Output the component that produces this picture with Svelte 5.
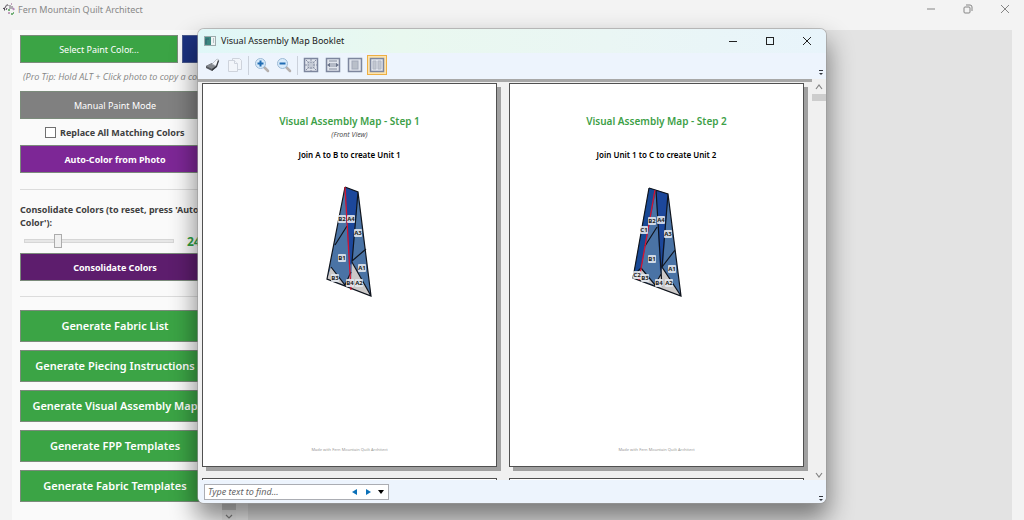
<script>
  let replaceAll = $state(false);
  let shades = $state(24);
  let query = $state('');

  const generators = ['Fabric List', 'Piecing Instructions', 'Visual Assembly Map', 'FPP Templates', 'Fabric Templates'];

  const steps = [
    {
      title: 'Visual Assembly Map - Step 1',
      view: '(Front View)',
      join: 'Join A to B to create Unit 1',
      shapes: [
        { p: '35,12 48,17 61,121 17,104', f: '#4a73a5' },
        { p: '35,12 48,17 42,89 39,90', f: '#1c479b' },
        { p: '42,86 61,121 41,113', f: '#ccc9c8' },
        { p: '21,92 35,110 17,104', f: '#ccc9c8' },
        { p: '41,97 42,114 35,110', f: '#ccc9c8' }
      ],
      lines: '35,12 48,17 61,121 17,104 35,12 M48,17 42,87 61,121 M56,74 42,86 M37,51 25,70 M21,92 35,110 41,97',
      seam: '35,12 41,115',
      labels: [['B2', 32, 44], ['A4', 41, 44], ['A3', 48, 58], ['B1', 32, 83], ['A1', 52, 93], ['B3', 25, 103], ['B4', 40, 108], ['A2', 49, 108]]
    },
    {
      title: 'Visual Assembly Map - Step 2',
      view: '',
      join: 'Join Unit 1 to C to create Unit 2',
      shapes: [
        { p: '32,13 51,19 64,121 16,103', f: '#4a73a5' },
        { p: '32,13 39,15 24,95 16,103', f: '#174895' },
        { p: '39,15 51,19 46,92 43,96', f: '#1c479b' },
        { p: '45,92 64,121 44,114', f: '#ccc9c8' },
        { p: '24,94 38,110 16,103', f: '#ccc9c8' },
        { p: '44,98 45,114 38,110', f: '#ccc9c8' }
      ],
      lines: '32,13 51,19 64,121 16,103 32,13 M39,15 45,112 M51,19 45,92 64,121 M58,75 45,92 M40,52 28,71 M24,93 38,110 44,99 M16,101 24,93',
      seam: '38,15 22,105',
      labels: [['B2', 35, 46], ['A4', 44, 45], ['C1', 27, 55], ['A3', 51, 59], ['B1', 35, 84], ['A1', 55, 94], ['C2', 20, 100], ['B3', 28, 103], ['B4', 42, 108], ['A2', 52, 108]]
    }
  ];
</script>

<div class="app">
  <header class="app-title">
    <svg class="logo" width="13" height="14" viewBox="0 0 13 14" aria-hidden="true">
      <path d="M1 6.500c2 0 2.500-1 3-2.500s2-2 2 0M2.500 8.500V6M5 6l-1 2" fill="none" stroke="#4d4651" />
      <path d="M8 3v4M10 4v3" stroke="#6d6471" />
      <path d="M11 6l1 2" stroke="#b48bb9" stroke-width="2" />
      <path d="M6 8h2M9 12h2M11 11h1" stroke="#4c9c53" stroke-width="1.500" />
      <path d="M6 11h2M9 2h1" stroke="#8f4d85" />
    </svg>
    <h1>Fern Mountain Quilt Architect</h1>
    <div class="app-controls">
      <button aria-label="Minimize application"><svg width="10" height="10" viewBox="0 0 10 10"><path d="M1 5h8" /></svg></button>
      <button aria-label="Restore application"><svg width="10" height="10" viewBox="0 0 10 10"><rect x="1" y="3" width="6" height="6" rx="1" /><path d="M3 1h4q2 0 2 2v4" /></svg></button>
      <button aria-label="Close application"><svg width="10" height="10" viewBox="0 0 10 10"><path d="M1 1l8 8M9 1L1 9" /></svg></button>
    </div>
  </header>

  <div class="workspace">
    <aside>
      <div class="tools">
        <div class="paint-row">
          <button class="fill green light">Select Paint Color...</button>
          <button class="swatch" aria-label="Current paint color"></button>
        </div>
        <p class="tip">(Pro Tip: Hold ALT + Click photo to copy a color)</p>
        <button class="fill gray light">Manual Paint Mode</button>
        <label class="check"><input type="checkbox" bind:checked={replaceAll} />Replace All Matching Colors</label>
        <button class="fill purple">Auto-Color from Photo</button>
        <hr />
        <label class="consolidate" for="shades">Consolidate Colors (to reset, press 'Auto-Color'):</label>
        <div class="slider-row">
          <input id="shades" type="range" min="2" max="110" bind:value={shades} />
          <output for="shades">{shades}</output>
        </div>
        <button class="fill plum">Consolidate Colors</button>
        <hr class="second" />
        <div class="generators">
          {#each generators as name}
            <button class="fill green">Generate {name}</button>
          {/each}
        </div>
      </div>
      <div class="side-scroll">
        <i></i>
        <svg width="8" height="6" viewBox="0 0 8 6" aria-hidden="true"><path d="M1 1l3 3 3-3" /></svg>
      </div>
    </aside>
    <main></main>
  </div>

  <section class="dialog" role="dialog" aria-labelledby="booklet-title">
    <header class="dialog-title">
      <svg width="12" height="10" viewBox="0 0 12 10" aria-hidden="true">
        <rect x=".5" y=".5" width="11" height="9" fill="#eef3f3" stroke="#9eabad" />
        <rect x="1" y="1" width="6" height="8" fill="#3c8780" />
        <path d="M2 8V3h3" fill="none" stroke="#32616c" />
        <path d="M9.500 2v5" stroke="#b7c5c8" />
      </svg>
      <h2 id="booklet-title">Visual Assembly Map Booklet</h2>
      <div class="dialog-controls">
        <button aria-label="Minimize"><svg width="10" height="10" viewBox="0 0 10 10"><path d="M1 5.500h8" /></svg></button>
        <button aria-label="Maximize"><svg width="10" height="10" viewBox="0 0 10 10"><rect x="1.500" y="1.500" width="7" height="7" /></svg></button>
        <button aria-label="Close"><svg width="10" height="10" viewBox="0 0 10 10"><path d="M1 1l8 8M9 1L1 9" /></svg></button>
      </div>
    </header>

    <div class="toolbar" role="toolbar" aria-label="Document">
      <button aria-label="Print">
        <svg width="16" height="16" viewBox="0 0 16 16">
          <path d="M1 9l6-3 5 3-5 5-6-3z" fill="#55585d" />
          <path d="M1 9l6-3 5 3-5 3z" fill="#85898e" />
          <path d="M7 7l5-5 2 1-3 6z" fill="#f4f6f9" stroke="#a9afb7" stroke-width=".7" />
          <path d="M13 3l1 1-2 6-5 4v-2l4-3z" fill="#34373c" />
        </svg>
      </button>
      <button aria-label="Copy">
        <svg width="16" height="16" viewBox="0 0 16 16" fill="#f2f5fa" stroke="#ced3dc">
          <path d="M5.500 1.500h7l2 2v9h-9z" /><path d="M1.500 3.500h6l3 3v8h-9z" /><path d="M7.500 3.500v3h3" />
        </svg>
      </button>
      <span class="sep"></span>
      {#each ['Zoom in', 'Zoom out'] as name, i}
        <button aria-label={name}>
          <svg width="16" height="16" viewBox="0 0 16 16">
            <path d="M10 10l4 4" stroke="#b5b0ae" stroke-width="2.500" stroke-linecap="round" />
            <circle cx="6.500" cy="6.500" r="5" fill="#d8ebfb" stroke="#9dbad5" />
            <path d={i ? 'M3.500 6.500h6' : 'M3.500 6.500h6M6.500 3.500v6'} stroke="#216db4" stroke-width="2" />
          </svg>
        </button>
      {/each}
      <span class="sep"></span>
      {#each ['Actual size', 'Page width', 'Whole page', 'Two pages'] as name, i}
        <button aria-label={name} class:active={i === 3}>
          <svg width="16" height="16" viewBox="0 0 16 16">
            <rect x="1.500" y="1.500" width="13" height="13" fill="#e1e5ed" stroke="#7d869e" stroke-width="1.500" />
            {#if i === 0}
              <rect x="4" y="4" width="8" height="8" fill="#c4cad5" />
              <path d="M8 2v4M8 10v4M2 8h4M10 8h4M3 3l3 3M13 3l-3 3M3 13l3-3M13 13l-3-3" stroke="#858da2" stroke-dasharray="2 1" />
            {:else if i === 1}
              <path d="M4 3h8v2H4zM4 11h8v2H4zM4 6h8v4H4z" fill="#b4bac6" />
              <path d="M2 8l3-2v4zM14 8l-3-2v4z" fill="#69738a" />
            {:else if i === 2}
              <rect x="5" y="4" width="6" height="8" fill="#b9bfc9" stroke="#a3aaba" />
            {:else}
              <path d="M4 4h3v8H4zM9 4h3v8H9z" fill="#c2c7d0" stroke="#b2b8c5" />
            {/if}
          </svg>
        </button>
      {/each}
      <svg class="overflow" width="6" height="6" viewBox="0 0 6 6" aria-hidden="true"><path d="M1 0h4v1H1zM1 3h4L3 5z" /></svg>
    </div>

    <div class="viewer">
      <div class="pages">
        {#each steps as step}
          <article>
            <h3>{step.title}</h3>
            <p class="view">{step.view}</p>
            <h4>{step.join}</h4>
            <svg class="block" width="80" height="130" viewBox="0 0 80 130" role="img" aria-label={step.join}>
              {#each step.shapes as s}<polygon points={s.p} fill={s.f} />{/each}
              <path d={'M' + step.lines} fill="none" stroke="#10151e" stroke-width="1.200" />
              <path d={'M' + step.seam} stroke="#d51431" stroke-width="1.300" />
              {#each step.labels as [t, x, y]}
                <rect x={x - 4} y={y - 4} width="8" height="8" rx="1" fill="#e4e8ef" fill-opacity=".88" />
                <text {x} y={y + 2}>{t}</text>
              {/each}
            </svg>
            <footer>Made with Fern Mountain Quilt Architect</footer>
          </article>
        {/each}
        <article class="next"></article>
        <article class="next"></article>
      </div>
      <div class="doc-scroll">
        <svg width="8" height="6" viewBox="0 0 8 6" aria-hidden="true"><path d="M1 5l3-4 3 4" /></svg>
        <i></i>
        <svg class="down" width="8" height="6" viewBox="0 0 8 6" aria-hidden="true"><path d="M1 1l3 4 3-4" /></svg>
      </div>
    </div>

    <div class="find-bar">
      <div class="find">
        <input type="text" aria-label="Find text" placeholder="Type text to find..." bind:value={query} />
        <button aria-label="Find previous"><svg width="6" height="6" viewBox="0 0 6 6"><path d="M5 0v6L0 3z" fill="#0a70b8" /></svg></button>
        <button aria-label="Find next"><svg width="6" height="6" viewBox="0 0 6 6"><path d="M1 0v6l5-3z" fill="#0a70b8" /></svg></button>
        <button aria-label="Find options"><svg width="6" height="6" viewBox="0 0 6 6"><path d="M0 1h6L3 5z" /></svg></button>
      </div>
      <svg class="overflow" width="6" height="6" viewBox="0 0 6 6" aria-hidden="true"><path d="M1 0h4v1H1zM1 3h4L3 5z" /></svg>
    </div>
  </section>
</div>

<style>
  :global(body) { margin: 0; }
  * { box-sizing: border-box; }
  h1, h2, h3, h4, p { margin: 0; font-weight: 400; }
  button, input { font: inherit; margin: 0; padding: 0; border: 0; background: none; }
  svg { display: block; flex: none; }
  .app {
    position: relative; height: 100vh; min-height: 520px; display: flex; flex-direction: column; overflow: hidden;
    background: #f3f3f3; font-family: "Noto Sans", "Open Sans", sans-serif; font-size: 9px; color: #404040;
  }
  .app-title { height: 30px; display: flex; align-items: flex-start; padding: 2px 14px 0 2px; gap: 3px; flex: none; }
  h1 { font-size: 9px; line-height: 15px; color: #888; }
  .app-controls { margin-left: auto; display: flex; gap: 27px; padding-top: 2px; }
  .app-controls svg, .dialog-controls svg { fill: none; stroke: #858585; }
  .app-controls button { width: 10px; height: 10px; }

  .workspace { flex: 1; min-height: 0; display: flex; padding: 0 12px; }
  aside { width: 224px; display: flex; background: #fafafa; flex: none; }
  .tools { width: 210px; padding: 5px 12px 0 8px; }
  .paint-row { display: flex; gap: 4px; }
  .fill { display: block; width: 100%; height: 28px; border: 1px solid #7b8b7b; color: #fff; font-weight: 700; white-space: nowrap; }
  .fill.light { font-weight: 400; }
  .paint-row .fill { flex: 1; }
  .swatch { width: 28px; height: 28px; background: #1c3281; border: 1px solid #4b5a8d; }
  .green { background: #3ba445; }
  .gray { background: #808080; }
  .purple { background: #7d2796; }
  .plum { background: #5d1d6d; }
  .tip { font-family: "Open Sans", "Noto Sans", sans-serif; line-height: 14px; margin: 7px 0; padding-left: 3px; font-style: italic; color: #858585; white-space: nowrap; }
  .check { display: flex; align-items: center; gap: 4px; padding-left: 25px; height: 26px; font-weight: 700; white-space: nowrap; }
  .check input { appearance: none; width: 11px; height: 11px; border: 1px solid #707070; background: #fff; }
  .check input:checked { background: #3ba445; }
  hr { border: 0; border-top: 1px solid #dcdcdc; margin: 16px 0 13px; }
  .consolidate { display: block; line-height: 13px; font-weight: 700; }
  .slider-row { display: flex; align-items: center; height: 24px; padding-left: 4px; gap: 13px; }
  .slider-row input { appearance: none; width: 150px; height: 14px; }
  .slider-row input::-webkit-slider-runnable-track { height: 4px; background: #e7e7e7; border: 1px solid #d6d6d6; }
  .slider-row input::-webkit-slider-thumb { appearance: none; width: 8px; height: 14px; margin-top: -6px; background: #f0f0f0; border: 1px solid #acacac; }
  output { font-size: 12px; font-weight: 700; color: #2fa142; }
  hr.second { margin: 15px 0 13px; }
  .generators { display: grid; gap: 8px; }
  .generators .fill { height: 32px; padding-bottom: 1px; font-size: 11px; font-weight: 600; }
  .side-scroll { width: 14px; display: flex; flex-direction: column; justify-content: flex-end; align-items: center; gap: 4px; background: #f0f0f0; }
  .side-scroll i { width: 14px; height: 440px; background: #cdcdcd; }
  .side-scroll svg, .doc-scroll svg { fill: none; stroke: #858585; stroke-width: 1.2; }
  main { flex: 1; margin-left: 12px; background: #e3e3e3; }

  .dialog {
    position: absolute; top: 29px; right: 198px; bottom: 17px; left: 198px; display: flex; flex-direction: column; overflow: hidden;
    background: #f0f0f0; border-radius: 6px; box-shadow: 0 0 0 1px #9999, 0 14px 26px 2px #0007;
  }
  .dialog-title { height: 24px; display: flex; align-items: center; gap: 5px; padding: 0 14px 0 6px; background: linear-gradient(90deg, #e0f7f8, #e9f8ef 32%, #eaf6f4 65%, #e8f4fb); flex: none; }
  h2 { font-size: 9px; line-height: 16px; color: #202020; }
  .dialog-controls { margin-left: auto; display: flex; gap: 27px; }
  .dialog-controls button { width: 10px; height: 10px; }
  .dialog-controls svg { stroke: #222; }
  .toolbar { height: 26px; display: flex; align-items: center; padding: 0 2px 2px 5px; gap: 2px; background: #edf4fd; flex: none; }
  .toolbar button { width: 20px; height: 20px; display: grid; place-items: center; }
  .toolbar .active { border: 1px solid #edaf43; background: #fce3ae; }
  .sep { width: 1px; height: 19px; margin: 0 1px; background: #cbd1db; }
  .overflow { fill: #30343c; margin: auto 0 1px auto; }
  .viewer { flex: 1; min-height: 0; display: flex; }
  .pages { flex: 1; display: grid; grid-template-columns: 1fr 1fr; align-content: start; gap: 11px 12px; padding: 1px 8px 0 4px; border-top: 3px solid #a8a8a8; overflow: hidden; }
  article { aspect-ratio: 295 / 384; min-width: 0; display: flex; flex-direction: column; align-items: center; background: #fff; border: 1px solid #505050; box-shadow: 4px 4px 0 #a0a0a0; padding: 29px 8px 11px; }
  h3 { font-size: 10px; line-height: 16px; font-weight: 600; color: #3da047; }
  .view { height: 12px; font-size: 7px; line-height: 12px; font-style: italic; color: #505050; }
  h4 { margin-top: 8px; font-size: 8px; line-height: 12px; font-weight: 600; color: #000; }
  .block { margin-top: 14px; }
  .block text { font-size: 6px; font-weight: 700; text-anchor: middle; fill: #222; }
  article footer { margin-top: auto; font-size: 4px; line-height: 10px; color: #999; }
  .doc-scroll { width: 14px; display: flex; flex-direction: column; align-items: center; padding: 5px 0 2px; gap: 4px; }
  .doc-scroll i { width: 14px; height: 7px; background: #cdcdcd; }
  .doc-scroll .down { margin-top: auto; }
  .find-bar { height: 23px; display: flex; align-items: center; padding: 0 2px 0 6px; background: #edf4fd; flex: none; }
  .find { width: 185px; height: 16px; display: flex; align-items: center; gap: 7px; padding: 0 4px 0 3px; background: #fff; border: 1px solid #abadb3; }
  .find input { flex: 1; min-width: 0; height: 14px; color: #333; outline: 0; font-style: italic; }
  .find input::placeholder { color: #666; }
  .find button { width: 6px; height: 6px; }
</style>
